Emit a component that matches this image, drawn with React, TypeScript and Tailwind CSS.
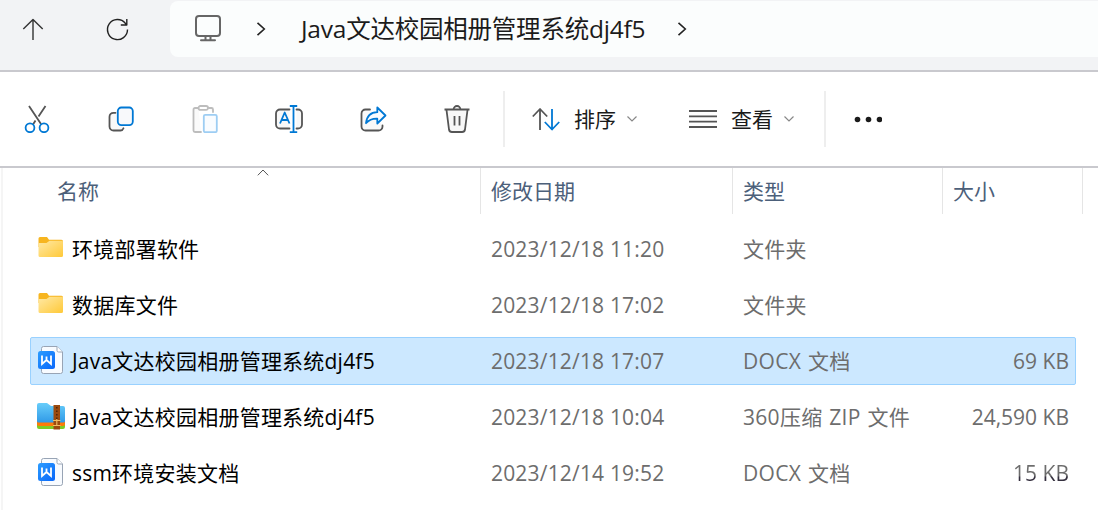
import type { ReactNode } from "react";

type FileKind = "folder" | "docx" | "zip";

type FileItem = {
  id: number;
  name: string;
  kind: FileKind;
  modified: string;
  type: string;
  size?: string;
  shaded?: boolean;
};

const files: FileItem[] = [
  { id: 1, name: "环境部署软件", kind: "folder", modified: "2023/12/18 11:20", type: "文件夹" },
  { id: 2, name: "数据库文件", kind: "folder", modified: "2023/12/18 17:02", type: "文件夹" },
  { id: 3, name: "Java文达校园相册管理系统dj4f5", kind: "docx", modified: "2023/12/18 17:07", type: "DOCX 文档", size: "69 KB" },
  { id: 4, name: "Java文达校园相册管理系统dj4f5", kind: "zip", modified: "2023/12/18 10:04", type: "360压缩 ZIP 文件", size: "24,590 KB" },
  { id: 5, name: "ssm环境安装文档", kind: "docx", modified: "2023/12/14 19:52", type: "DOCX 文档", size: "15 KB", shaded: true },
];

const selectedId = 3;

function Icon({ children }: { children: ReactNode }) {
  return (
    <svg
      viewBox="0 0 28 28"
      className="size-7 shrink-0"
      fill="none"
      stroke="#555"
      strokeWidth="1.8"
      strokeLinecap="round"
      strokeLinejoin="round"
    >
      {children}
    </svg>
  );
}

function ChevronRight() {
  return (
    <svg viewBox="0 0 10 14" className="h-3.5 w-2.5 shrink-0" fill="none" stroke="#222" strokeWidth="1.6">
      <path d="M1.500 .8 8.300 7l-6.800 6.200" />
    </svg>
  );
}

function ChevronDown() {
  return (
    <svg viewBox="0 0 10 6" className="h-1.5 w-2.5 shrink-0" fill="none" stroke="#888" strokeWidth="1.2">
      <path d="M.5.5 5 5 9.500.5" />
    </svg>
  );
}

function AddressBar() {
  return (
    <header className="flex h-[72px] items-start border-b-2 border-[#c9c9ce] bg-[#f2f3f5]">
      <div className="mt-[15px] ml-[19px] flex gap-14">
        <Icon>
          <g stroke="#333" strokeWidth="1.4" strokeLinecap="butt">
            <path d="M14 25V4.500M4.300 14 14 4.500 23.700 14" />
          </g>
        </Icon>
        <Icon>
          <g stroke="#222" strokeWidth="1.4" strokeLinecap="butt">
            <path d="M24.500 14.500a10 10 0 1 1-2.200-6.200L23.800 10M23.800 4v6h-6" />
          </g>
        </Icon>
      </div>
      <div className="mt-px ml-[39px] flex h-14 flex-1 items-center rounded-l-lg bg-[#fbfdfd] pl-6">
        <svg viewBox="0 0 28 28" className="mb-0.5 size-7 shrink-0" fill="none" stroke="#666" strokeWidth="2" strokeLinecap="round">
          <rect x="2" y="2" width="24" height="20" rx="3" />
          <path d="M11.500 22v4M16.500 22v4M7 26.300h14" />
        </svg>
        <div className="ml-[34px]">
          <ChevronRight />
        </div>
        <h1 className="ml-[35px] w-[344px] text-[24.500px] leading-8 tracking-[-0.22px] whitespace-nowrap text-[#1b1b1b]">
          Java文达校园相册管理系统dj4f5
        </h1>
        <div className="ml-8">
          <ChevronRight />
        </div>
      </div>
    </header>
  );
}

function Toolbar() {
  return (
    <div className="flex h-24 items-center border-b-2 border-[#c9c9ce] bg-white pl-[23px]">
      <div className="flex gap-14">
        <Icon>
          <path d="M6 1 18 19M22.500 1l-7 10.500M12.500 15.500 10 19.500" strokeLinecap="butt" />
          <g stroke="#0078d4">
            <circle cx="7" cy="22.800" r="4.400" />
            <circle cx="21" cy="22.800" r="4.400" />
          </g>
        </Icon>
        <Icon>
          <path d="M8.500 7.800H6.500a4 4 0 0 0-4 4V21.500a4 4 0 0 0 4 4h7c1.500 0 2.500-.8 3-2.200" fill="#f8f8f8" />
          <rect x="10.800" y="2.500" width="15" height="17.600" rx="3.500" stroke="#0078d4" fill="#f8f9fb" />
        </Icon>
        <Icon>
          <g stroke="#bdbdbd">
            <path d="M7.500 3H4a1.500 1.500 0 0 0-1.500 1.500v21A1.500 1.500 0 0 0 4 27h6M17.500 3h3a1.500 1.500 0 0 1 1.500 1.500V7" fill="#fafafa" />
            <rect x="7.500" y="1" width="9.500" height="3.800" rx="1.900" fill="#fff" />
          </g>
          <rect x="12.800" y="9.800" width="13" height="17.400" rx="1.500" stroke="#9dcdf3" fill="#f9fcff" />
        </Icon>
        <Icon>
          <path d="M14.500 4.500H5A4 4 0 0 0 1 8.500v11a4 4 0 0 0 4 4h9.500M21.500 4.500H23a4 4 0 0 1 4 4v11a4 4 0 0 1-4 4h-1.500" fill="#f8f8f8" />
          <path d="M5 18.500 9.700 7.500 14.500 18.500M6.700 15h6M14.800 1h7.400M14.800 27.200h7.400M18.500 1v26" stroke="#0078d4" strokeLinecap="butt" />
        </Icon>
        <Icon>
          <path d="M11 4.500H6.500a4 4 0 0 0-4 4v13a4 4 0 0 0 4 4h13a4 4 0 0 0 4-4v-1" fill="#f8f8f8" />
          <path d="M18.300 2.500 26.500 10.500l-8.200 8v-4.800c-5-.2-8.300 1.200-11.300 4.500.8-7 4.500-10.800 11.300-11z" stroke="#0078d4" fill="#f9fcff" />
        </Icon>
        <Icon>
          <path d="M3.500 5 6 24.500a3 3 0 0 0 3 2.500h10a3 3 0 0 0 3-2.500L24.500 5" fill="#f8f8f8" />
          <path d="M1.500 4.500h25M10.500 4.500a3.500 3.500 0 0 1 7 0M11.500 11v9.500M16.500 11v9.500" strokeLinecap="butt" />
        </Icon>
      </div>

      <div className="ml-8 h-14 w-0.5 bg-[#eee]" />

      <button className="ml-[27px] flex items-center">
        <Icon>
          <path d="M8 25V4M.800 11.500 8 4l7.200 7.500" strokeLinecap="butt" />
          <path d="M20 4v20.500M12.800 17 20 24.500 27.200 17" stroke="#0078d4" strokeLinecap="butt" />
        </Icon>
        <span className="ml-3.5 text-[21px] leading-7 text-[#1b1b1b]">排序</span>
        <span className="ml-[11px]">
          <ChevronDown />
        </span>
      </button>

      <button className="ml-[52px] flex items-center">
        <Icon>
          <path d="M0 6h28M0 11.300h28M0 16.700h28M0 22h28" />
        </Icon>
        <span className="ml-3.5 text-[21px] leading-7 text-[#1b1b1b]">查看</span>
        <span className="ml-[11px]">
          <ChevronDown />
        </span>
      </button>

      <div className="ml-[30px] h-14 w-0.5 bg-[#eee]" />

      <button className="ml-7">
        <Icon>
          <g fill="#1b1b1b" stroke="none">
            <circle cx="3.500" cy="14.500" r="2.800" />
            <circle cx="14.500" cy="14.500" r="2.800" />
            <circle cx="25.500" cy="14.500" r="2.800" />
          </g>
        </Icon>
      </button>
    </div>
  );
}

function FileIcon({ kind }: { kind: FileKind }) {
  if (kind === "folder") {
    return (
      <svg viewBox="0 0 28 28" className="size-7 shrink-0">
        <defs>
          <linearGradient id="folder" x1="0" y1="0" x2="1" y2="1">
            <stop offset="0" stopColor="#ffe9a6" />
            <stop offset="1" stopColor="#ffc938" />
          </linearGradient>
        </defs>
        <path d="M1.500 4.500A1.500 1.500 0 0 1 3 3h7l2 2.700h12.500A1.500 1.500 0 0 1 26 7.200V13H1.500z" fill="#f7b51f" />
        <path d="M1.500 9H9.500l3-2.300H25a1 1 0 0 1 1 1v13.800a1.500 1.500 0 0 1-1.500 1.500H3a1.500 1.500 0 0 1-1.500-1.500z" fill="url(#folder)" />
      </svg>
    );
  }

  if (kind === "zip") {
    return (
      <svg viewBox="0 0 28 28" className="size-7 shrink-0">
        <defs>
          <linearGradient id="zip" x1="0" y1="0" x2="0" y2="1">
            <stop offset="0" stopColor="#68cdfa" />
            <stop offset="1" stopColor="#309ae7" />
          </linearGradient>
        </defs>
        <path d="M0 18h28v7a2 2 0 0 1-2 2H2a2 2 0 0 1-2-2z" fill="#7fcb25" />
        <path d="M0 17h28v5a2 2 0 0 1-2 2H2a2 2 0 0 1-2-2z" fill="#ff7a08" />
        <path d="M0 3a2 2 0 0 1 2-2h8l4 3h12a2 2 0 0 1 2 2v13a1.500 1.500 0 0 1-1.500 1.500h-25A1.500 1.500 0 0 1 0 19z" fill="url(#zip)" />
        <path d="M16.500 3h6.500v24.500h-6.500z" fill="#9b4a0e" />
        <path d="M19.800 5v12" stroke="#512408" strokeWidth="1.500" strokeDasharray="1.500 2" />
        <path d="M16 18.500h7.500M16 23.500h7.500M19.800 17v7" stroke="#f3bd62" strokeWidth="1.100" />
      </svg>
    );
  }

  return (
    <svg viewBox="0 0 28 28" className="size-7 shrink-0">
      <defs>
        <linearGradient id="docx" x1="0" y1="0" x2="1" y2="1">
          <stop offset="0" stopColor="#2c9dff" />
          <stop offset="1" stopColor="#0866fa" />
        </linearGradient>
      </defs>
      <path d="M6.500.5H20L25.500 6v19.500a2 2 0 0 1-2 2h-17a2 2 0 0 1-2-2v-23a2 2 0 0 1 2-2z" fill="#f8fbff" stroke="#98a4b5" />
      <path d="M20 .5V4.500A1.500 1.500 0 0 0 21.500 6h4" fill="#fff" stroke="#98a4b5" />
      <rect x="1" y="5" width="17" height="18" rx="2.500" fill="url(#docx)" />
      <path d="M5 9.500V18l4.500-4 4.500 4V9.500M9.500 10.500V14" fill="none" stroke="#fff" strokeWidth="1.800" />
    </svg>
  );
}

function ColumnHeaders() {
  return (
    <div className="grid h-[46px] grid-cols-[478px_252px_210px_140px] text-[21px] leading-[46px] text-[#4c607a]">
      <div className="relative border-r border-[#e5e5e5] pl-[54px]">
        名称
        <svg viewBox="0 0 12 7" className="absolute top-px left-[254px] h-[7px] w-3" fill="none" stroke="#555">
          <path d="M.8 6.300 6 1l5.200 5.300" />
        </svg>
      </div>
      <div className="border-r border-[#e5e5e5] pl-2.5">修改日期</div>
      <div className="border-r border-[#e5e5e5] pl-2.5">类型</div>
      <div className="border-r border-[#e5e5e5] pl-2.5">大小</div>
    </div>
  );
}

function FileRow({ file, selected }: { file: FileItem; selected: boolean }) {
  return (
    <div
      className={`grid h-12 grid-cols-[460px_252px_170px_1fr] items-center rounded-xs border pr-1.5 text-[21px] leading-7 whitespace-nowrap text-[#6d6d6d] ${
        selected ? "border-[#99d1ff] bg-[#cce8ff]" : "border-transparent"
      }`}
    >
      <div className="flex items-center pl-1.5 text-black">
        <div className="mb-0.5">
          <FileIcon kind={file.kind} />
        </div>
        <span className="ml-[7px] tracking-[0.22px]">{file.name}</span>
      </div>
      <span className="tracking-[0.18px]">{file.modified}</span>
      <span className="tracking-[0.3px] [word-spacing:1px]">{file.type}</span>
      <span
        className={`text-right ${
          file.shaded ? "bg-linear-to-b from-[#6d6d6d] from-60% to-[#35303f] to-65% bg-clip-text text-transparent" : ""
        }`}
      >
        {file.size}
      </span>
    </div>
  );
}

export default function App() {
  return (
    <main className="flex h-[510px] w-[1098px] flex-col overflow-hidden bg-white font-['Open_Sans','Noto_Sans_CJK_SC',sans-serif]">
      <AddressBar />
      <Toolbar />
      <section className="ml-px flex-1 border-l-2 border-[#f5f5f5]">
        <ColumnHeaders />
        <div className="mt-[11px] ml-[27px] flex w-[1046px] flex-col gap-2">
          {files.map((file) => (
            <FileRow key={file.id} file={file} selected={file.id === selectedId} />
          ))}
        </div>
      </section>
    </main>
  );
}
